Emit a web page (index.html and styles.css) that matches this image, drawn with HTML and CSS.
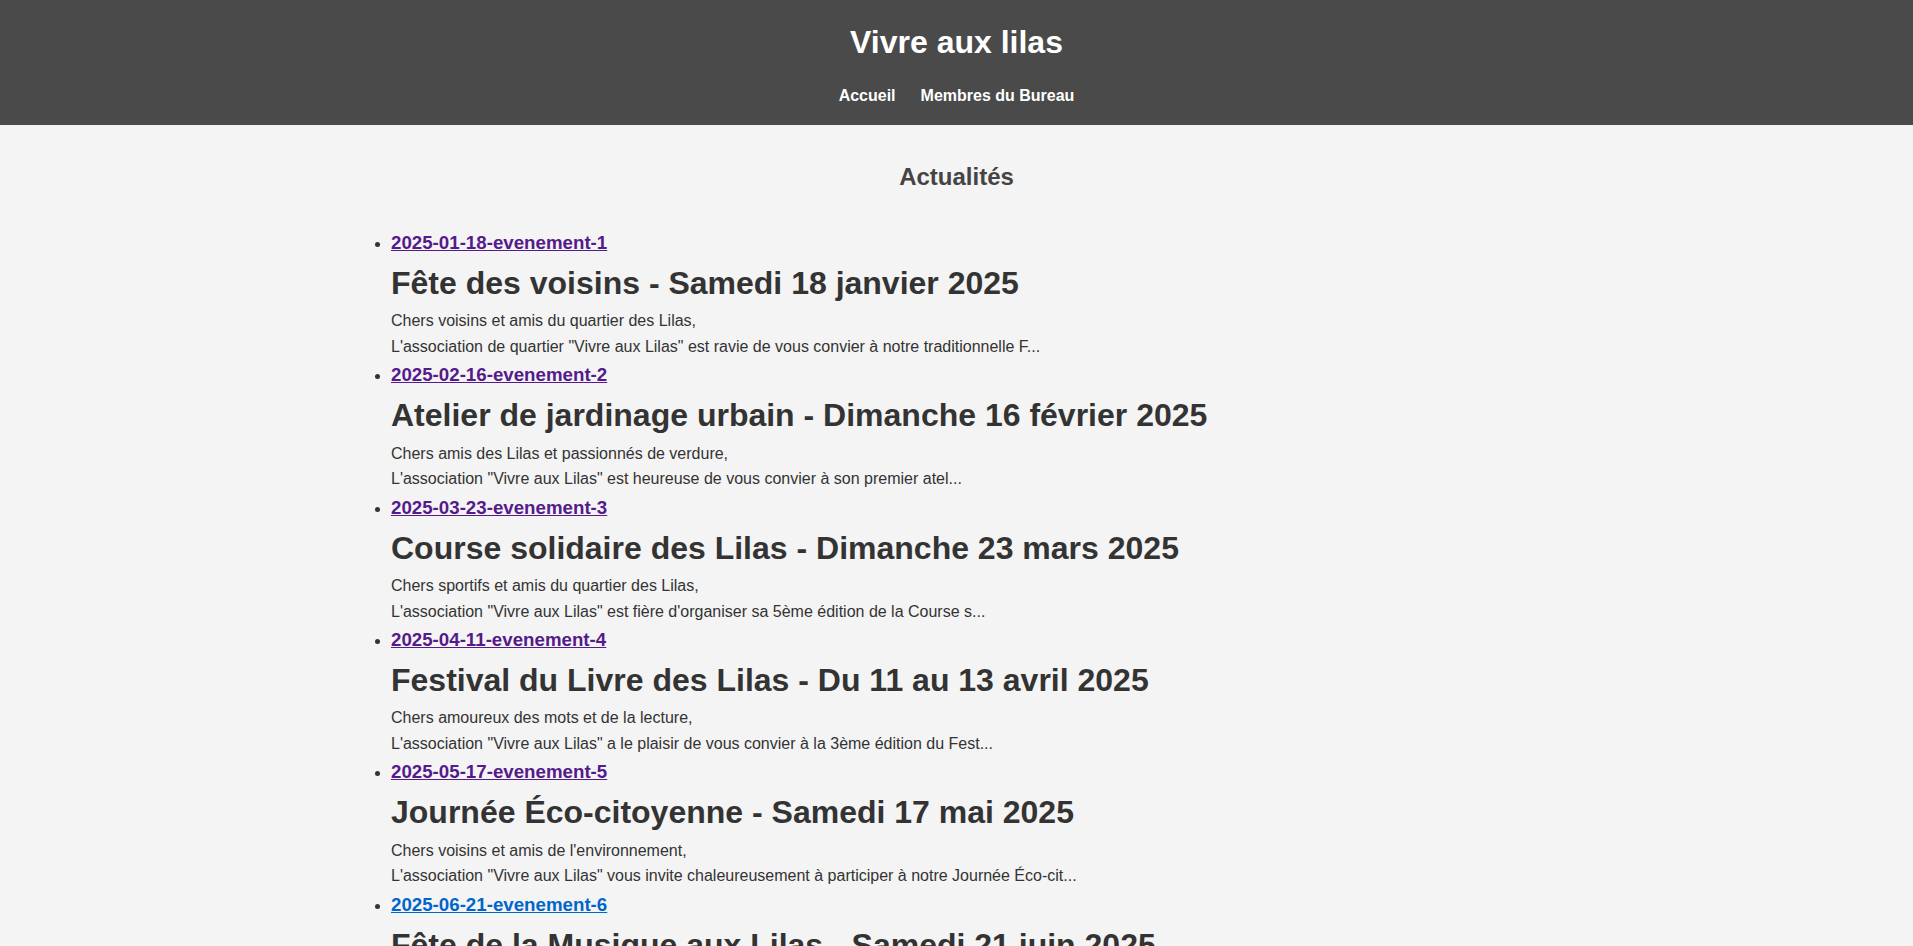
FILE: index.html
```html
<!DOCTYPE html>
<html lang="fr">
<head>
<meta charset="utf-8">
<title>Vivre aux lilas</title>
<link rel="stylesheet" href="styles.css">
</head>
<body>
<header class="site-header">
  <h1 class="site-title">Vivre aux lilas</h1>
  <nav class="site-nav">
    <a href="#">Accueil</a>
    <a href="#">Membres du Bureau</a>
  </nav>
</header>
<main class="content">
  <h2 class="section-title">Actualités</h2>
  <ul class="news">
    <li class="news-item">
      <h3 class="news-slug"><a class="visited" href="#">2025-01-18-evenement-1</a></h3>
      <h1 class="news-title">Fête des voisins - Samedi 18 janvier 2025</h1>
      <p class="news-excerpt">Chers voisins et amis du quartier des Lilas,<br>L'association de quartier "Vivre aux Lilas" est ravie de vous convier à notre traditionnelle F...</p>
    </li>
    <li class="news-item">
      <h3 class="news-slug"><a class="visited" href="#">2025-02-16-evenement-2</a></h3>
      <h1 class="news-title">Atelier de jardinage urbain - Dimanche 16 février 2025</h1>
      <p class="news-excerpt">Chers amis des Lilas et passionnés de verdure,<br>L'association "Vivre aux Lilas" est heureuse de vous convier à son premier atel...</p>
    </li>
    <li class="news-item">
      <h3 class="news-slug"><a class="visited" href="#">2025-03-23-evenement-3</a></h3>
      <h1 class="news-title">Course solidaire des Lilas - Dimanche 23 mars 2025</h1>
      <p class="news-excerpt">Chers sportifs et amis du quartier des Lilas,<br>L'association "Vivre aux Lilas" est fière d'organiser sa 5ème édition de la Course s...</p>
    </li>
    <li class="news-item">
      <h3 class="news-slug"><a class="visited" href="#">2025-04-11-evenement-4</a></h3>
      <h1 class="news-title">Festival du Livre des Lilas - Du 11 au 13 avril 2025</h1>
      <p class="news-excerpt">Chers amoureux des mots et de la lecture,<br>L'association "Vivre aux Lilas" a le plaisir de vous convier à la 3ème édition du Fest...</p>
    </li>
    <li class="news-item">
      <h3 class="news-slug"><a class="visited" href="#">2025-05-17-evenement-5</a></h3>
      <h1 class="news-title">Journée Éco-citoyenne - Samedi 17 mai 2025</h1>
      <p class="news-excerpt">Chers voisins et amis de l'environnement,<br>L'association "Vivre aux Lilas" vous invite chaleureusement à participer à notre Journée Éco-cit...</p>
    </li>
    <li class="news-item">
      <h3 class="news-slug"><a href="#">2025-06-21-evenement-6</a></h3>
      <h1 class="news-title">Fête de la Musique aux Lilas - Samedi 21 juin 2025</h1>
      <p class="news-excerpt">Chers voisins et amis mélomanes,<br>L'association "Vivre aux Lilas" est heureuse de vous convier à la Fête de la Musique...</p>
    </li>
  </ul>
</main>
</body>
</html>
```
FILE: styles.css
```css
html, body {
  margin: 0;
  padding: 0;
}
body {
  font-family: "Liberation Sans", Arial, sans-serif;
  font-size: 16px;
  line-height: 1.6;
  color: #333;
  background: #f4f4f4;
}
.site-header {
  background: #4a4a4a;
  color: #fff;
  text-align: center;
  padding: 17px 0 16px;
}
.site-title {
  margin: 0;
  font-size: 32px;
  font-weight: bold;
}
.site-nav {
  margin-top: 15px;
  display: flex;
  justify-content: center;
  gap: 25px;
}
.site-nav a {
  color: #fff;
  text-decoration: none;
  font-weight: bold;
  font-size: 16px;
}
.content {
  max-width: 1211px;
  margin: 0 auto;
  padding: 20px 0;
}
.section-title {
  text-align: center;
  font-size: 24px;
  color: #444;
  margin: 13px 0 31px;
}
.news {
  margin: 0;
  padding-left: 40px;
}
.news-slug {
  margin: 0;
  font-size: 18.72px;
  padding-top: 1px;
}
.news-slug a {
  color: #0066cc;
}
.news-slug a.visited {
  color: #551a8b;
}
.news-title {
  margin: 0;
  font-size: 32px;
}
.news-excerpt {
  margin: 0;
  font-size: 16px;
  margin-top: -1px;
}
```
